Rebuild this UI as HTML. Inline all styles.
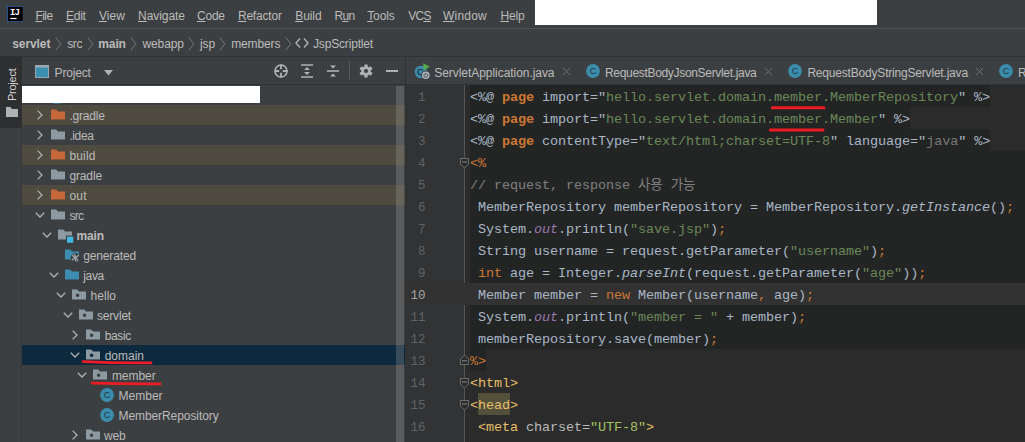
<!DOCTYPE html>
<html><head><meta charset="utf-8"><title>servlet</title>
<style>
html,body{margin:0;padding:0;background:#3c3f41;}
body{width:1025px;height:442px;position:relative;overflow:hidden;font-family:"Liberation Sans", "Noto Sans CJK KR", sans-serif;font-size:12px;color:#bbbbbb;}
.a{position:absolute;display:block}
.t{position:absolute;height:20px;line-height:20px;white-space:nowrap;color:#bbbbbb;font-size:12px}
.t u{text-decoration:underline;text-underline-offset:1px}
.box{position:absolute}
.ln{position:absolute;left:470px;height:22px;line-height:22px;font-family:"Liberation Mono", "Noto Sans CJK KR", monospace;font-size:13.5px;letter-spacing:-0.1px;color:#a9b7c6;white-space:pre}
.lt{display:inline-block;height:22px}
.dk{background:#232525}
.num{position:absolute;left:406px;width:19.5px;height:22px;line-height:22px;text-align:right;font-family:"Liberation Mono", "Noto Sans CJK KR", monospace;font-size:12.5px;color:#606366}
.num.cur{color:#a4a3a3}
.k{color:#cc7832} .kb{color:#cc7832;font-weight:bold} .s{color:#6a8759} .c{color:#808080} .g{color:#787878}
.i{font-style:italic} .o{font-style:italic;color:#9876aa} .hl{color:#e8bf6a} .at{color:#bababa} .as{color:#a5c261}
</style></head><body>
<!-- menu bar -->
<div class="box" style="left:0;top:0;width:1025px;height:28px;background:#3c3f41"></div>
<div class="box" style="left:0;top:28px;width:1025px;height:1px;background:#515151"></div>
<div class="box" style="left:535px;top:0;width:342px;height:25px;background:#fff"></div>
<svg class="a" style="left:6.6px;top:6px" width="16.6" height="16" viewBox="0 0 16.6 16"><rect x="0" y="0" width="16.6" height="16" fill="#2f62ad"/><rect x="0.8" y="0.8" width="15" height="14.4" fill="#000"/><text x="3" y="9.2" font-family="Liberation Mono, monospace" font-weight="bold" font-size="9" letter-spacing="-1" fill="#fff">IJ</text><rect x="3.3" y="11.9" width="6.3" height="1.2" fill="#fff"/></svg>
<!-- nav bar -->
<div class="box" style="left:0;top:56px;width:1025px;height:1px;background:#323232"></div>
<!-- left strip -->
<div class="box" style="left:0;top:57px;width:22px;height:385px;background:#3c3f41"></div>
<div class="box" style="left:0;top:57px;width:22px;height:71px;background:#2d2f30"></div>
<div class="box" style="left:21px;top:128px;width:1px;height:314px;background:#353739"></div>
<div class="t" style="left:1.8px;top:100.5px;font-size:11px;letter-spacing:-0.25px;transform-origin:0 0;transform:rotate(-90deg);color:#d4d4d4" id="vproj">Project</div>
<!-- project header -->
<div class="box" style="left:22px;top:84px;width:383px;height:1px;background:#323232"></div>
<!-- tree rows bg -->
<div class="box" style="left:22px;top:85px;width:383px;height:357px;background:#3c3f41"></div>
<div class="box" style="left:22px;top:105px;width:383px;height:20px;background:#4f4b41"></div>
<div class="box" style="left:22px;top:145px;width:383px;height:20px;background:#4f4b41"></div>
<div class="box" style="left:22px;top:185px;width:383px;height:20px;background:#4f4b41"></div>
<div class="box" style="left:22px;top:345px;width:383px;height:20px;background:#0d293e"></div>
<div class="box" style="left:53px;top:103px;width:7px;height:1px;background:#2f7191"></div>
<div class="box" style="left:22px;top:86px;width:238px;height:17px;background:#fff"></div>
<!-- scrollbar -->
<div class="box" style="left:396px;top:86px;width:8px;height:356px;background:rgba(166,166,166,0.28)"></div>
<div class="box" style="left:405px;top:57px;width:1px;height:385px;background:#323232"></div>
<!-- header icons -->
<svg class="a" style="left:35px;top:64px" width="16" height="16" viewBox="0 0 16 16"><rect x="0.5" y="1.5" width="13" height="12" fill="#3a8eb2" stroke="#9aa7b0" stroke-width="1"/><rect x="0" y="1" width="14" height="2.6" fill="#9aa7b0"/></svg>
<svg class="a" style="left:103.5px;top:69.5px" width="10" height="6" viewBox="0 0 10 6"><path d="M0 0 H9 L4.5 5.5 Z" fill="#afb1b3"/></svg>
<svg class="a" style="left:273px;top:63px" width="16" height="16" viewBox="0 0 16 16"><circle cx="8" cy="8" r="6" fill="none" stroke="#afb1b3" stroke-width="1.6"/><path d="M8 1.5 V6.2 M8 9.8 V14.5 M1.5 8 H6.2 M9.8 8 H14.5" stroke="#afb1b3" stroke-width="1.8"/></svg>
<svg class="a" style="left:299px;top:63px" width="16" height="16" viewBox="0 0 16 16"><path d="M2 2 H14 M2 14 H14" stroke="#afb1b3" stroke-width="1.6"/><path d="M5 7 L8 4 L11 7 Z M5 9 L8 12 L11 9 Z" fill="#afb1b3"/></svg>
<svg class="a" style="left:325px;top:63px" width="16" height="16" viewBox="0 0 16 16"><path d="M2 8 H14" stroke="#afb1b3" stroke-width="1.6"/><path d="M5 2.5 L8 5.5 L11 2.5 Z M5 13.5 L8 10.5 L11 13.5 Z" fill="#afb1b3"/></svg>
<div class="box" style="left:349px;top:61px;width:1px;height:19px;background:#555759"></div>
<svg class="a" style="left:358px;top:63px" width="16" height="16" viewBox="0 0 16 16"><g fill="#afb1b3"><circle cx="8" cy="8" r="4.7"/><rect x="6.3" y="1.4" width="3.4" height="13.2" rx="0.6"/><rect x="6.3" y="1.4" width="3.4" height="13.2" rx="0.6" transform="rotate(60 8 8)"/><rect x="6.3" y="1.4" width="3.4" height="13.2" rx="0.6" transform="rotate(120 8 8)"/></g><circle cx="8" cy="8" r="2" fill="#3c3f41"/></svg>
<div class="box" style="left:386px;top:70px;width:12px;height:2px;background:#afb1b3"></div>
<svg class="a" style="left:32px;top:107px" width="16" height="16" viewBox="0 0 16 16"><path d="M5.6 3.6 L10 8 L5.6 12.4" fill="none" stroke="#afb1b3" stroke-width="1.3"/></svg>
<svg class="a" style="left:51px;top:107px" width="16" height="17" viewBox="0 0 16 17"><path d="M0 2.6 H5.2 L7 4.6 H14 V12.6 H0 Z" fill="#c5673a" fill-rule="evenodd"/></svg>
<svg class="a" style="left:32px;top:127px" width="16" height="16" viewBox="0 0 16 16"><path d="M5.6 3.6 L10 8 L5.6 12.4" fill="none" stroke="#afb1b3" stroke-width="1.3"/></svg>
<svg class="a" style="left:51px;top:127px" width="16" height="17" viewBox="0 0 16 17"><path d="M0 2.6 H5.2 L7 4.6 H14 V12.6 H0 Z" fill="#8e9aa2" fill-rule="evenodd"/></svg>
<svg class="a" style="left:32px;top:147px" width="16" height="16" viewBox="0 0 16 16"><path d="M5.6 3.6 L10 8 L5.6 12.4" fill="none" stroke="#afb1b3" stroke-width="1.3"/></svg>
<svg class="a" style="left:51px;top:147px" width="16" height="17" viewBox="0 0 16 17"><path d="M0 2.6 H5.2 L7 4.6 H14 V12.6 H0 Z" fill="#c5673a" fill-rule="evenodd"/></svg>
<svg class="a" style="left:32px;top:167px" width="16" height="16" viewBox="0 0 16 16"><path d="M5.6 3.6 L10 8 L5.6 12.4" fill="none" stroke="#afb1b3" stroke-width="1.3"/></svg>
<svg class="a" style="left:51px;top:167px" width="16" height="17" viewBox="0 0 16 17"><path d="M0 2.6 H5.2 L7 4.6 H14 V12.6 H0 Z" fill="#8e9aa2" fill-rule="evenodd"/></svg>
<svg class="a" style="left:32px;top:187px" width="16" height="16" viewBox="0 0 16 16"><path d="M5.6 3.6 L10 8 L5.6 12.4" fill="none" stroke="#afb1b3" stroke-width="1.3"/></svg>
<svg class="a" style="left:51px;top:187px" width="16" height="17" viewBox="0 0 16 17"><path d="M0 2.6 H5.2 L7 4.6 H14 V12.6 H0 Z" fill="#c5673a" fill-rule="evenodd"/></svg>
<svg class="a" style="left:32px;top:207px" width="16" height="16" viewBox="0 0 16 16"><path d="M3.8 5.8 L8 10 L12.2 5.8" fill="none" stroke="#afb1b3" stroke-width="1.3"/></svg>
<svg class="a" style="left:51px;top:207px" width="16" height="17" viewBox="0 0 16 17"><path d="M0 2.6 H5.2 L7 4.6 H14 V12.6 H0 Z" fill="#8e9aa2" fill-rule="evenodd"/></svg>
<svg class="a" style="left:39px;top:227px" width="16" height="16" viewBox="0 0 16 16"><path d="M3.8 5.8 L8 10 L12.2 5.8" fill="none" stroke="#afb1b3" stroke-width="1.3"/></svg>
<svg class="a" style="left:58px;top:227px" width="16" height="17" viewBox="0 0 16 17"><path d="M0 2.6 H5.2 L7 4.6 H14 V12.6 H0 Z" fill="#8e9aa2" fill-rule="evenodd"/><rect x="8" y="8.5" width="8" height="8" fill="#3c3f41"/><rect x="9" y="9.6" width="6.2" height="6.2" fill="#40b6e0"/></svg>
<svg class="a" style="left:65px;top:247px" width="16" height="17" viewBox="0 0 16 17"><path d="M0 2.6 H5.2 L7 4.6 H14 V12.6 H0 Z" fill="#3d8db0" fill-rule="evenodd"/><circle cx="10.3" cy="10.7" r="4.6" fill="#3c3f41"/><g stroke="#a3adb4" stroke-width="1.2" fill="none" stroke-linecap="round"><path d="M10.3 10.7 Q10.8 8.4 9.2 7.3 M10.3 10.7 Q12.5 10 13.4 8.4 M10.3 10.7 Q12.4 11.8 12.8 13.6 M10.3 10.7 Q9.8 13 11 14.2 M10.3 10.7 Q8.1 11.4 7.2 13 M10.3 10.7 Q8.2 9.6 7.4 8.2"/></g></svg>
<svg class="a" style="left:46px;top:267px" width="16" height="16" viewBox="0 0 16 16"><path d="M3.8 5.8 L8 10 L12.2 5.8" fill="none" stroke="#afb1b3" stroke-width="1.3"/></svg>
<svg class="a" style="left:65px;top:267px" width="16" height="17" viewBox="0 0 16 17"><path d="M0 2.6 H5.2 L7 4.6 H14 V12.6 H0 Z" fill="#3d8db0" fill-rule="evenodd"/></svg>
<svg class="a" style="left:53px;top:287px" width="16" height="16" viewBox="0 0 16 16"><path d="M3.8 5.8 L8 10 L12.2 5.8" fill="none" stroke="#afb1b3" stroke-width="1.3"/></svg>
<svg class="a" style="left:72px;top:287px" width="16" height="17" viewBox="0 0 16 17"><path d="M0 2.6 H5.2 L7 4.6 H14 V12.6 H0 Z M3.8 8.3 a1.8 1.8 0 1 0 3.6 0 a1.8 1.8 0 1 0 -3.6 0 Z" fill="#8e9aa2" fill-rule="evenodd"/></svg>
<svg class="a" style="left:60px;top:307px" width="16" height="16" viewBox="0 0 16 16"><path d="M3.8 5.8 L8 10 L12.2 5.8" fill="none" stroke="#afb1b3" stroke-width="1.3"/></svg>
<svg class="a" style="left:79px;top:307px" width="16" height="17" viewBox="0 0 16 17"><path d="M0 2.6 H5.2 L7 4.6 H14 V12.6 H0 Z M3.8 8.3 a1.8 1.8 0 1 0 3.6 0 a1.8 1.8 0 1 0 -3.6 0 Z" fill="#8e9aa2" fill-rule="evenodd"/></svg>
<svg class="a" style="left:67px;top:327px" width="16" height="16" viewBox="0 0 16 16"><path d="M5.6 3.6 L10 8 L5.6 12.4" fill="none" stroke="#afb1b3" stroke-width="1.3"/></svg>
<svg class="a" style="left:86px;top:327px" width="16" height="17" viewBox="0 0 16 17"><path d="M0 2.6 H5.2 L7 4.6 H14 V12.6 H0 Z M3.8 8.3 a1.8 1.8 0 1 0 3.6 0 a1.8 1.8 0 1 0 -3.6 0 Z" fill="#8e9aa2" fill-rule="evenodd"/></svg>
<svg class="a" style="left:67px;top:347px" width="16" height="16" viewBox="0 0 16 16"><path d="M3.8 5.8 L8 10 L12.2 5.8" fill="none" stroke="#afb1b3" stroke-width="1.3"/></svg>
<svg class="a" style="left:86px;top:347px" width="16" height="17" viewBox="0 0 16 17"><path d="M0 2.6 H5.2 L7 4.6 H14 V12.6 H0 Z M3.8 8.3 a1.8 1.8 0 1 0 3.6 0 a1.8 1.8 0 1 0 -3.6 0 Z" fill="#8e9aa2" fill-rule="evenodd"/></svg>
<svg class="a" style="left:74px;top:367px" width="16" height="16" viewBox="0 0 16 16"><path d="M3.8 5.8 L8 10 L12.2 5.8" fill="none" stroke="#afb1b3" stroke-width="1.3"/></svg>
<svg class="a" style="left:93px;top:367px" width="16" height="17" viewBox="0 0 16 17"><path d="M0 2.6 H5.2 L7 4.6 H14 V12.6 H0 Z M3.8 8.3 a1.8 1.8 0 1 0 3.6 0 a1.8 1.8 0 1 0 -3.6 0 Z" fill="#8e9aa2" fill-rule="evenodd"/></svg>
<svg class="a" style="left:100px;top:387px" width="16" height="16" viewBox="0 0 16 16"><circle cx="7" cy="8" r="6.9" fill="#3b8cab"/><text x="7" y="11.2" text-anchor="middle" font-family="Liberation Sans, sans-serif" font-size="9" fill="#1b3542">C</text></svg>
<svg class="a" style="left:100px;top:407px" width="16" height="16" viewBox="0 0 16 16"><circle cx="7" cy="8" r="6.9" fill="#3b8cab"/><text x="7" y="11.2" text-anchor="middle" font-family="Liberation Sans, sans-serif" font-size="9" fill="#1b3542">C</text></svg>
<svg class="a" style="left:67px;top:427px" width="16" height="16" viewBox="0 0 16 16"><path d="M5.6 3.6 L10 8 L5.6 12.4" fill="none" stroke="#afb1b3" stroke-width="1.3"/></svg>
<svg class="a" style="left:86px;top:427px" width="16" height="17" viewBox="0 0 16 17"><path d="M0 2.6 H5.2 L7 4.6 H14 V12.6 H0 Z M3.8 8.3 a1.8 1.8 0 1 0 3.6 0 a1.8 1.8 0 1 0 -3.6 0 Z" fill="#8e9aa2" fill-rule="evenodd"/></svg>
<!-- red underlines -->
<svg class="a" style="left:80px;top:358px" width="90" height="30" viewBox="0 0 90 30"><path d="M3.2 3.6 Q35 5.2 71 4.9" fill="none" stroke="#ed1c24" stroke-width="2.8" stroke-linecap="round"/><path d="M12.3 25.2 Q45 26.2 80 25.9" fill="none" stroke="#ed1c24" stroke-width="2.8" stroke-linecap="round"/></svg>
<!-- editor -->
<div class="box" style="left:406px;top:57px;width:619px;height:28px;background:#3c3f41"></div>
<div class="box" style="left:406px;top:84px;width:619px;height:1px;background:#323232"></div>
<div class="box" style="left:406px;top:85px;width:59px;height:357px;background:#313335"></div>
<div class="box" style="left:465px;top:85px;width:560px;height:357px;background:#2b2b2b"></div>
<div class="box" style="left:464px;top:85px;width:1px;height:357px;background:#555555"></div>
<div class="box" style="left:470px;top:151px;width:555px;height:198px;background:#232525"></div>
<div class="box" style="left:406px;top:283px;width:619px;height:22px;background:#323232"></div>
<div class="box" style="left:470px;top:85px;width:520px;height:22px;background:#232525"></div>
<div class="ln" style="top:86.6px"><span class="p">&lt;%@ </span><span class="kb">page</span><span class="p"> import="</span><span class="s">hello.servlet.domain.member.MemberRepository</span><span class="p">" %&gt;</span></div>
<div class="num" style="top:86.6px">1</div>
<div class="box" style="left:470px;top:107px;width:440px;height:22px;background:#232525"></div>
<div class="ln" style="top:108.6px"><span class="p">&lt;%@ </span><span class="kb">page</span><span class="p"> import="</span><span class="s">hello.servlet.domain.member.Member</span><span class="p">" %&gt;</span></div>
<div class="num" style="top:108.6px">2</div>
<div class="box" style="left:470px;top:129px;width:520px;height:22px;background:#232525"></div>
<div class="ln" style="top:130.6px"><span class="p">&lt;%@ </span><span class="kb">page</span><span class="p"> contentType="</span><span class="s">text/html;charset=UTF-8</span><span class="p">" language="</span><span class="g">java</span><span class="p">" %&gt;</span></div>
<div class="num" style="top:130.6px">3</div>
<div class="ln" style="top:152.6px"><span class="k">&lt;%</span></div>
<div class="num" style="top:152.6px">4</div>
<div class="ln" style="top:174.6px"><span class="c">// request, response 사용 가능</span></div>
<div class="num" style="top:174.6px">5</div>
<div class="ln" style="top:196.6px"><span class="p"> MemberRepository memberRepository = MemberRepository.</span><span class="i">getInstance</span><span class="p">()</span><span class="k">;</span></div>
<div class="num" style="top:196.6px">6</div>
<div class="ln" style="top:218.6px"><span class="p"> System.</span><span class="o">out</span><span class="p">.println(</span><span class="s">"save.jsp"</span><span class="p">)</span><span class="k">;</span></div>
<div class="num" style="top:218.6px">7</div>
<div class="ln" style="top:240.6px"><span class="p"> String username = request.getParameter(</span><span class="s">"username"</span><span class="p">)</span><span class="k">;</span></div>
<div class="num" style="top:240.6px">8</div>
<div class="ln" style="top:262.6px"><span class="p"> </span><span class="k">int</span><span class="p"> age = Integer.</span><span class="i">parseInt</span><span class="p">(request.getParameter(</span><span class="s">"age"</span><span class="p">))</span><span class="k">;</span></div>
<div class="num" style="top:262.6px">9</div>
<div class="ln" style="top:284.6px"><span class="p"> Member member = </span><span class="k">new</span><span class="p"> Member(username</span><span class="k">,</span><span class="p"> age)</span><span class="k">;</span></div>
<div class="num cur" style="top:284.6px">10</div>
<div class="ln" style="top:306.6px"><span class="p"> System.</span><span class="o">out</span><span class="p">.println(</span><span class="s">"member = "</span><span class="p"> + member)</span><span class="k">;</span></div>
<div class="num" style="top:306.6px">11</div>
<div class="ln" style="top:328.6px"><span class="p"> memberRepository.save(member)</span><span class="k">;</span></div>
<div class="num" style="top:328.6px">12</div>
<div class="box" style="left:470px;top:349px;width:16px;height:22px;background:#232525"></div>
<div class="ln" style="top:350.6px"><span class="k">%&gt;</span></div>
<div class="num" style="top:350.6px">13</div>
<div class="ln" style="top:372.6px"><span class="hl">&lt;html&gt;</span></div>
<div class="num" style="top:372.6px">14</div>
<div class="box" style="left:478px;top:393px;width:32px;height:22px;background:#52503a"></div>
<div class="ln" style="top:394.6px"><span class="hl">&lt;head&gt;</span></div>
<div class="num" style="top:394.6px">15</div>
<div class="ln" style="top:416.6px"><span class="hl"> &lt;meta</span><span class="at"> charset=</span><span class="as">"UTF-8"</span><span class="hl">&gt;</span></div>
<div class="num" style="top:416.6px">16</div>
<div class="ln" style="top:438.6px"><span class="hl"> &lt;</span></div>
<div class="num" style="top:438.6px">17</div>
<svg class="a" style="left:460px;top:156px" width="9" height="13" viewBox="0 0 9 13"><path d="M0.5 2.5 H8.5 V8 L4.5 12 L0.5 8 Z" fill="#2b2b2b" stroke="#6c6e70" stroke-width="1"/><path d="M2 6 H7" stroke="#8a8c8e" stroke-width="1"/></svg><svg class="a" style="left:460px;top:354px" width="9" height="13" viewBox="0 0 9 13"><path d="M0.5 10.5 H8.5 V5 L4.5 1 L0.5 5 Z" fill="#2b2b2b" stroke="#6c6e70" stroke-width="1"/><path d="M2 6.8 H7" stroke="#8a8c8e" stroke-width="1"/></svg><svg class="a" style="left:460px;top:376px" width="9" height="13" viewBox="0 0 9 13"><path d="M0.5 2.5 H8.5 V8 L4.5 12 L0.5 8 Z" fill="#2b2b2b" stroke="#6c6e70" stroke-width="1"/><path d="M2 6 H7" stroke="#8a8c8e" stroke-width="1"/></svg><svg class="a" style="left:460px;top:398px" width="9" height="13" viewBox="0 0 9 13"><path d="M0.5 2.5 H8.5 V8 L4.5 12 L0.5 8 Z" fill="#2b2b2b" stroke="#6c6e70" stroke-width="1"/><path d="M2 6 H7" stroke="#8a8c8e" stroke-width="1"/></svg>
<svg class="a" style="left:765px;top:100px" width="70" height="36" viewBox="0 0 70 36"><path d="M7.3 7.8 L59 7.8" fill="none" stroke="#ed1c24" stroke-width="3" stroke-linecap="round"/><path d="M5.3 30 L58 30" fill="none" stroke="#ed1c24" stroke-width="3" stroke-linecap="round"/></svg>
<!-- tab icons -->
<svg class="a" style="left:586px;top:63px" width="16" height="16" viewBox="0 0 16 16"><circle cx="7" cy="8" r="6.9" fill="#3b8cab"/><text x="7" y="11.2" text-anchor="middle" font-family="Liberation Sans, sans-serif" font-size="9" fill="#1b3542">C</text></svg>
<svg class="a" style="left:788px;top:63px" width="16" height="16" viewBox="0 0 16 16"><circle cx="7" cy="8" r="6.9" fill="#3b8cab"/><text x="7" y="11.2" text-anchor="middle" font-family="Liberation Sans, sans-serif" font-size="9" fill="#1b3542">C</text></svg>
<svg class="a" style="left:999px;top:63px" width="16" height="16" viewBox="0 0 16 16"><circle cx="7" cy="8" r="6.9" fill="#3b8cab"/><text x="7" y="11.2" text-anchor="middle" font-family="Liberation Sans, sans-serif" font-size="9" fill="#1b3542">C</text></svg>
<svg class="a" style="left:414px;top:63px" width="18" height="18" viewBox="0 0 18 18"><circle cx="7" cy="9" r="6.3" fill="#3b8cab"/><text x="6.3" y="12.2" text-anchor="middle" font-family="Liberation Sans, sans-serif" font-size="9" fill="#1b3542" stroke="#1b3542" stroke-width="0.3">C</text><path d="M9.3 0.3 L16 3.8 L9.3 7.3 Z" fill="#59a84b"/><circle cx="11.8" cy="12.2" r="4.6" fill="#3c3f41"/><circle cx="11.8" cy="12.2" r="3.8" fill="#aeb9c0"/><circle cx="11.8" cy="12.4" r="1.9" fill="none" stroke="#3c3f41" stroke-width="0.9"/><path d="M11.8 9.6 V12.2" stroke="#aeb9c0" stroke-width="2"/><path d="M11.8 9.8 V12.2" stroke="#3c3f41" stroke-width="0.9"/></svg>
<svg class="a" style="left:562px;top:67px" width="9" height="9" viewBox="0 0 9 9"><path d="M1 1 L8 8 M8 1 L1 8" stroke="#6e6e6e" stroke-width="1"/></svg>
<svg class="a" style="left:764px;top:67px" width="9" height="9" viewBox="0 0 9 9"><path d="M1 1 L8 8 M8 1 L1 8" stroke="#6e6e6e" stroke-width="1"/></svg>
<svg class="a" style="left:975px;top:67px" width="9" height="9" viewBox="0 0 9 9"><path d="M1 1 L8 8 M8 1 L1 8" stroke="#6e6e6e" stroke-width="1"/></svg>
<!-- breadcrumb chevrons -->
<svg class="a" style="left:55px;top:37px" width="7" height="14" viewBox="0 0 7 14"><path d="M0.8 0.5 L5.8 6.8 L0.8 13.1" fill="none" stroke="#75777a" stroke-width="1"/></svg><svg class="a" style="left:87px;top:37px" width="7" height="14" viewBox="0 0 7 14"><path d="M0.8 0.5 L5.8 6.8 L0.8 13.1" fill="none" stroke="#75777a" stroke-width="1"/></svg><svg class="a" style="left:130px;top:37px" width="7" height="14" viewBox="0 0 7 14"><path d="M0.8 0.5 L5.8 6.8 L0.8 13.1" fill="none" stroke="#75777a" stroke-width="1"/></svg><svg class="a" style="left:188px;top:37px" width="7" height="14" viewBox="0 0 7 14"><path d="M0.8 0.5 L5.8 6.8 L0.8 13.1" fill="none" stroke="#75777a" stroke-width="1"/></svg><svg class="a" style="left:219px;top:37px" width="7" height="14" viewBox="0 0 7 14"><path d="M0.8 0.5 L5.8 6.8 L0.8 13.1" fill="none" stroke="#75777a" stroke-width="1"/></svg><svg class="a" style="left:285px;top:37px" width="7" height="14" viewBox="0 0 7 14"><path d="M0.8 0.5 L5.8 6.8 L0.8 13.1" fill="none" stroke="#75777a" stroke-width="1"/></svg>
<svg class="a" style="left:295px;top:37px" width="14" height="12" viewBox="0 0 14 12"><path d="M5 1.5 L1 6 L5 10.5 M9 1.5 L13 6 L9 10.5" fill="none" stroke="#afb1b3" stroke-width="1.4"/></svg>
<!-- folder icon in left strip -->
<svg class="a" style="left:6px;top:106px" width="12" height="12" viewBox="0 0 12 12"><path d="M0 1 H4.5 L6 3 H12 V11 H0 Z" fill="#afb1b3"/></svg>
<!-- texts -->
<span class="t" id="t0" style="left:35.4px;top:6.0px;letter-spacing:-0.514px;"><u>F</u>ile</span>
<span class="t" id="t1" style="left:66.1px;top:6.0px;letter-spacing:-0.274px;"><u>E</u>dit</span>
<span class="t" id="t2" style="left:98.9px;top:6.0px;letter-spacing:0.073px;"><u>V</u>iew</span>
<span class="t" id="t3" style="left:138.1px;top:6.0px;letter-spacing:-0.060px;"><u>N</u>avigate</span>
<span class="t" id="t4" style="left:197.0px;top:6.0px;letter-spacing:-0.225px;"><u>C</u>ode</span>
<span class="t" id="t5" style="left:237.9px;top:6.0px;letter-spacing:-0.183px;"><u>R</u>efactor</span>
<span class="t" id="t6" style="left:295.2px;top:6.0px;letter-spacing:-0.059px;"><u>B</u>uild</span>
<span class="t" id="t7" style="left:334.4px;top:6.0px;letter-spacing:-0.611px;">R<u>u</u>n</span>
<span class="t" id="t8" style="left:367.2px;top:6.0px;letter-spacing:-0.106px;"><u>T</u>ools</span>
<span class="t" id="t9" style="left:408.2px;top:6.0px;letter-spacing:-0.729px;">VC<u>S</u></span>
<span class="t" id="t10" style="left:443.0px;top:6.0px;letter-spacing:0.201px;"><u>W</u>indow</span>
<span class="t" id="t11" style="left:500.4px;top:6.0px;letter-spacing:-0.100px;"><u>H</u>elp</span>
<span class="t" id="t12" style="left:12.3px;top:33.6px;letter-spacing:-0.100px;font-weight:bold;">servlet</span>
<span class="t" id="t13" style="left:67.3px;top:33.6px;letter-spacing:-0.434px;">src</span>
<span class="t" id="t14" style="left:98.3px;top:33.6px;letter-spacing:-0.129px;font-weight:bold;">main</span>
<span class="t" id="t15" style="left:142.5px;top:33.6px;letter-spacing:-0.124px;">webapp</span>
<span class="t" id="t16" style="left:200.0px;top:33.6px;letter-spacing:-0.115px;">jsp</span>
<span class="t" id="t17" style="left:231.2px;top:33.6px;letter-spacing:-0.117px;">members</span>
<span class="t" id="t18" style="left:313.0px;top:33.6px;letter-spacing:-0.169px;">JspScriptlet</span>
<span class="t" id="t19" style="left:54.6px;top:63.4px;letter-spacing:-0.166px;">Project</span>
<span class="t" id="t20" style="left:69.4px;top:106.0px;letter-spacing:-0.200px;">.gradle</span>
<span class="t" id="t21" style="left:69.4px;top:126.0px;letter-spacing:-0.385px;">.idea</span>
<span class="t" id="t22" style="left:69.4px;top:146.0px;letter-spacing:0.167px;">build</span>
<span class="t" id="t23" style="left:69.4px;top:166.0px;letter-spacing:-0.128px;">gradle</span>
<span class="t" id="t24" style="left:69.4px;top:186.0px;letter-spacing:0.306px;">out</span>
<span class="t" id="t25" style="left:69.4px;top:206.0px;letter-spacing:-0.636px;">src</span>
<span class="t" id="t26" style="left:76.5px;top:226.0px;letter-spacing:-0.129px;font-weight:bold;">main</span>
<span class="t" id="t27" style="left:83.2px;top:246.0px;letter-spacing:-0.138px;">generated</span>
<span class="t" id="t28" style="left:83.2px;top:266.0px;letter-spacing:-0.307px;">java</span>
<span class="t" id="t29" style="left:90.6px;top:286.0px;letter-spacing:0.007px;">hello</span>
<span class="t" id="t30" style="left:97.0px;top:306.0px;letter-spacing:-0.192px;">servlet</span>
<span class="t" id="t31" style="left:104.7px;top:326.0px;letter-spacing:-0.364px;">basic</span>
<span class="t" id="t32" style="left:104.7px;top:346.0px;letter-spacing:-0.012px;">domain</span>
<span class="t" id="t33" style="left:111.9px;top:366.0px;letter-spacing:-0.035px;">member</span>
<span class="t" id="t34" style="left:118.5px;top:386.0px;letter-spacing:0.015px;">Member</span>
<span class="t" id="t35" style="left:118.5px;top:406.0px;letter-spacing:-0.079px;">MemberRepository</span>
<span class="t" id="t36" style="left:104.0px;top:426.0px;letter-spacing:-0.207px;">web</span>
<span class="t" id="t37" style="left:434.3px;top:63.2px;letter-spacing:-0.053px;">ServletApplication.java</span>
<span class="t" id="t38" style="left:605.0px;top:63.2px;letter-spacing:-0.319px;">RequestBodyJsonServlet.java</span>
<span class="t" id="t39" style="left:807.4px;top:63.2px;letter-spacing:-0.193px;">RequestBodyStringServlet.java</span>
<span class="t" id="t40" style="left:1018.0px;top:63.2px;letter-spacing:-0.672px;">R</span>
</body></html>
